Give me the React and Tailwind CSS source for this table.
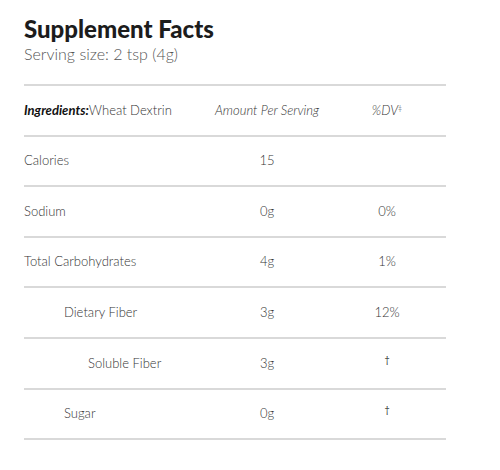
import React from 'react';

const rows = [
    { label: 'Calories', amount: '15', dv: '', indent: 'pl-0' },
    { label: 'Sodium', amount: '0g', dv: '0%', indent: 'pl-0' },
    { label: 'Total Carbohydrates', amount: '4g', dv: '1%', indent: 'pl-0' },
    { label: 'Dietary Fiber', amount: '3g', dv: '12%', indent: 'pl-10' },
    { label: 'Soluble Fiber', amount: '3g', dv: '†', indent: 'pl-16', dagger: true },
    { label: 'Sugar', amount: '0g', dv: '†', indent: 'pl-10', dagger: true },
];

const Row = ({ children, className = '' }) => (
    <div className={`grid grid-cols-[190px_106px_1fr] items-center h-[50.6px] border-b-2 border-[#d9d9d9] ${className}`}>
        {children}
    </div>
);

export default function App() {
    return (
        <div className="w-[500px] h-[470px] bg-white px-6 text-[#353535]" style={{ fontFamily: 'Lato, "Open Sans", sans-serif' }}>
            <div className="h-[84px] pt-[15px]">
                <h1 className="text-[24px] leading-[28px] font-black text-[#1c1c1c]">Supplement Facts</h1>
                <p className="text-[16px] leading-[22px] font-light text-[#555]">Serving size: 2 tsp (4g)</p>
            </div>

            <div className="w-[422px] border-t-2 border-[#d9d9d9] text-[13px] font-light">
                <Row>
                    <div>
                        <span className="font-bold italic text-[#111]">Ingredients:</span>
                        <span>Wheat Dextrin</span>
                    </div>
                    <div className="text-center italic">Amount Per Serving</div>
                    <div className="pl-2 text-center italic">
                        %DV<sup className="text-[7px] not-italic">‡</sup>
                    </div>
                </Row>
                {rows.map((r) => (
                    <Row key={r.label}>
                        <div className={r.indent}>{r.label}</div>
                        <div className="text-center">{r.amount}</div>
                        <div className={`pl-2 text-center ${r.dagger ? 'text-[9px] -mt-[8px] font-normal text-[#333]' : ''}`}>{r.dv}</div>
                    </Row>
                ))}
            </div>
        </div>
    );
}
